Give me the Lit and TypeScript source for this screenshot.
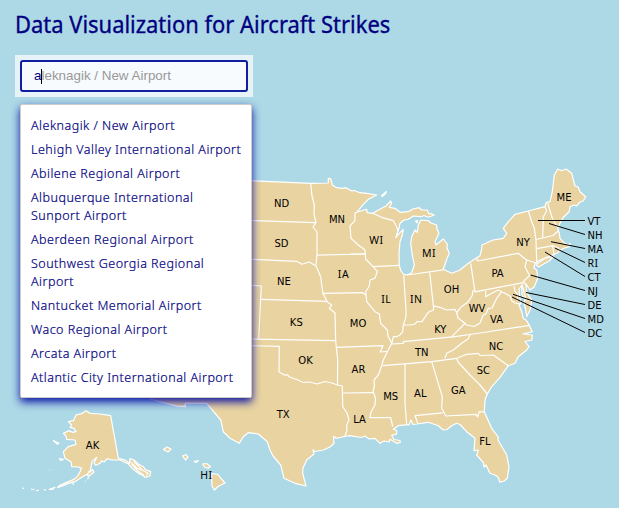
import { LitElement, html, svg, css } from "lit";
import { customElement } from "lit/decorators.js";

const MAINLAND =
  "M150 300L200 178L252 180.7L310.7 183.3L328.3 183V178.3L330.7 178.7L332.3 185L336.7 187.7L342.3 188.3L346 187.7L351.7 191L354 190.5L360 192.7L366.7 193.3L376.7 195L368.3 199.3L363.3 204.3L356.7 212.3L366.7 209.3L367.3 212.7L372.7 213.3L381.7 208.3L386 206L390.7 201L391.7 203.3L389.3 207.3L395 208.3L400 212.3L408.3 211.7L413 209L419 207.7L421.7 210L427.3 210L429 214L431 213.5L434.3 215L428.3 217.3L424 215.5L421.7 216.7L413.3 216L408.3 219.3L404 220L400 223.3L399 228.3L395.7 237.7L399.3 233.3L403.3 229.3L402.3 235L400 241.7L399 253.3L399.3 265.7L401 271L403.3 274L407.3 275L411.7 272.7L414.3 265L412.3 255L410.7 243.3L411.7 236.7L415 230L417.3 232.3L418.3 225L420.7 220L428.3 220.7L431 223L436.7 225L437 229L439 233.3L435 241.7L436 245L440 241.7L443.3 239L447.3 244L447 248L449.3 253.3L446.7 259.3L443.3 269.3L451.7 273.3L460 270L468.3 263.3L480 255.7L481.7 249L482 245L493 240L503.3 238.3L506.7 233.3L503.3 228.3L508.3 221.7L515 214.3L528.3 211L545 206.7L546 202.7L550 201.7L552.3 191.7L553.3 183.3L554.3 175L557.7 169L561.7 170.7L566 169L571.7 173.3L575 186L578 187L580 191.7L585.7 196.7L583 201L580 202L576.7 206L574 205L570 206.7L569.3 211.7L563.3 217.3L560 223.3L557.7 228.3L559.3 233.3L560 238.3L564 242.7L568.5 245L570 243.3L569.5 246.7L563.3 248.3L556.7 253.3L546.7 257.3L538.3 260.7L535 264L534 268L536.7 270L537.7 278.3L534.3 286.7L530 290L526 284L526.7 292.7L531.7 300L530 310L526.7 316.7L525.5 308.3L524 304L525 299L522 295L521.7 285.5L519 289L519.5 295L521 303.3L519 305L521.7 311.7L523.3 318.3L526 320L528.3 323.3L532.3 331.7L523 334L532.3 335L532 340L525 341.5L529 346.7L526.7 350L518.3 356.7L515 363.3L508.3 365.7L500 377.3L491.7 386.7L487.3 394L485 400L484.3 411.7L491.7 428.3L498.3 437L498 440L506.7 455L509 466.7L507.3 478.3L504 481L500 482.3L498 477L495 475L490 473.3L486 465L484 467L483.3 462.7L476.7 455L478.3 450L474 450.7L475 438.3L466.7 431.7L460 424.5L456.7 423.3L451.7 425.7L447 429.5L443.3 430L438.3 425.7L428.3 422.3L416.7 424L412.7 424.3L411 420L409 425L405 424.8L398.3 425.7L393.3 429.3L396.7 430.5L396.5 434.3L391.7 435L394 439.5L400 440.5L400.3 442.5L396.7 443.3L390 439.3L389 442L384 441L380 443.3L375 438.3L369 439L365 436L361 437.5L350 435.7L346.7 436L336 438.3L333.5 436.3L334 443.3L330 447L323.3 450L315 451.5L313 450L314 454L306.7 460L303 468L302.7 473.3L306 486L295 483.3L284 478.3L280.7 465L273 456L270 450L267.3 441.7L258.3 434L248.3 432.7L243.3 436.7L239.3 443.3L230 438.3L223.3 431.7L220.7 420L206.7 403.3L185.3 403V406.7L176.7 406L150 399Z";

const ISLANDS =
  "M538 263L545 258.5L554 256L549 261L538.5 267L536.5 265.5ZM381.5 195.5L386.5 191.5L385 194.5L382 196.5ZM415.5 221L417.5 220.5L417 223ZM163.5 449.5L167 447L171 449L168 452ZM182.5 456L186 454.5L188 457L185.5 460ZM194 461.5L198.5 460.5L196 462.5ZM202.5 464L206.5 463.5L210.5 466.5L208 468.3L204.5 467ZM211.5 473.5L218 474.5L221 478.5L225 483L218 486.5L214.5 490L212 486Z";

const ALASKA =
  "M205 65L220 62L228 45L245 41L258 32L270 40L300 42L332 47L355 175L375 180L388 190L390 176L402 180L415 192L430 200L436 209L452 215L450 228L435 232L427 225L415 220L400 208L385 192L360 180L335 180L322 176L312 186L305 182L300 190L288 196L282 190L290 172L276 184L272 208L262 222L245 232L225 245L205 250L190 257L172 263L178 257L200 247L222 238L235 226L245 205L235 201L215 200L213 185L195 175L190 155L205 140L228 133L225 120L200 118L198 108L190 100L207 92L218 97L228 95L222 85L210 82L215 75ZM160 122L177 130L172 133ZM178 176L190 178L182 181ZM262 222L278 209L282 216L265 230ZM390 185L412 205L430 212L444 220L438 226M400 184L425 207M395 192L415 214L432 226M157 265L165 262L158 268L148 268ZM131 270L138 269M108 272L117 271M93 267L103 269M67 263L72 266M148 210H150M256 244H258M262 237L266 234M217 253L222 251";

const BORDERS = [
  "310.7,183.3 312,196 314.3,205 314,214 316,222.7 313,227 317,232 317,255 316,265",
  "252,220.5 316,222.7",
  "317,255.2 365,254",
  "252,259.3 296.7,261.3 302,264.3 309.3,262 316,266 318.7,272 320.7,277 321.7,285 323,293.3 327.3,302 331.7,305 329.3,308.3 335,313 335.7,341 336.3,347 337.7,360 337.5,385",
  "261,299.3 327,301.3",
  "252,285.3 261.3,286 258.7,339",
  "252,339 335.5,340.7",
  "252,345.7 279.3,346.3 279,372 285,375.3 287,374.5 290,377.3 297,379.5 303,382.5 310,382 317,384 325,381.5 332,383 337.3,385 342.3,386 342.7,406.7 347,413 349,420 346.7,425 347,430 345,436",
  "342.7,393 374,392.7",
  "323,293.3 362.7,292.7 366,295",
  "336.3,347.3 383,345.7 381,350 380,352 387,351.5",
  "356.7,212.3 355,213 355,220.7 350,226 351,238.3 358.3,245 365,250 365.7,259.3 373.3,266.7 377.3,271.7 375,278.3 370,280 369.3,286 365.7,291.7 366.7,301.7 375,311.7 379.3,314 380.7,323.3 387.3,330 388,336 391.7,343.3 388.3,350 383.3,360 381.7,365.7 378.3,375 374,380 374.5,386 373,391 375.5,398.3 375,405 371,412 370,417.7 390.7,417.7 392.7,426.7",
  "350,254.2 365,254",
  "373.3,266.7 399,265.3",
  "372.7,213.3 381.7,217.3 393.3,220.7 396.7,226.7 398,231",
  "403.7,275 405,295 406,310 406,316.7 403.3,325 402.7,331.7 400,335 396.7,336.7 393.3,336.7 391.7,343.7",
  "403.3,325 410,325 415,324 417,321.7 422,321.7 428.3,312.3 433.3,310 434,306 440,307.3 446.7,310 455,309.3 456.7,312.7 460.7,307.3 468.3,301.7 472,296 473.3,290",
  "429.7,272.5 433.5,307",
  "407.3,275 443.3,269.8",
  "470.7,263.3 475,291.9 523.3,282.7",
  "456.7,312.7 458,318 465,323.3 451.7,336.7",
  "462,321 466.7,325 474,326.5 480,323 483.3,315 486,314 488.3,308.3 492,308 496.7,298.3 501.7,291.7",
  "485.7,291 485.7,296.7 491.7,293.3 498,290 501.7,291.7 510,296 511.7,300.7 515,303 521,304",
  "522,284 526,300 531.7,300",
  "514,286 515,291 518,295 517,301",
  "477,258 477.3,261 518.3,253.3 524,258 526.7,260 525,266.7 528.3,273.3 530,275 523.3,281.7 526,285",
  "526.7,260 536.7,263.3",
  "528.3,211 531.7,221.7 534.3,228.3 536,240 536.7,262",
  "545,206.7 546.7,211 543.3,216.7 542.7,237.8",
  "547.7,203.3 552.3,218.3 557,227",
  "536,239.5 553.3,235.5 558,231",
  "536.7,248.7 553.3,245.7 558,248 560,250",
  "552.5,246 554,254",
  "530,325.3 480,333 455,336.7 403.3,341.7 403.3,343.3 391.7,344",
  "382.7,365.7 431.7,361.7 456.7,358.3 466.7,354.3 478.3,353.3 480,355.5 493.3,355 508.3,365.7",
  "445,358.3 446.7,353.3 453.3,350 461.7,343.3 468,339 470,335",
  "456.7,358.5 458,362 470,375 480,385 487.3,394",
  "431.7,361.7 442.3,396.7 441.7,408 445.7,416 476,414.3 477.5,417 479.3,411.7 484.3,412",
  "405,364 405,403 406.7,425",
  "417.7,423 415,415.7 442.7,412.8",
];

const LABELS: [string, number, number][] = [
  ["ND", 281.5, 203.5], ["SD", 281.5, 243.5], ["MN", 337, 219.5], ["WI", 376.5, 240.5],
  ["MI", 429, 253.5], ["IA", 343.5, 274.5], ["NE", 284, 281.5], ["IL", 386.3, 299.5],
  ["IN", 416.3, 299.5], ["OH", 451.5, 289.5], ["PA", 497.5, 273.5], ["NY", 523, 242.5],
  ["ME", 564, 197.5], ["KS", 296.3, 322.5], ["MO", 358, 323.5], ["KY", 440.3, 329.5],
  ["WV", 477, 308.5], ["VA", 496.5, 319.5], ["OK", 305.5, 360.5], ["AR", 358.5, 369.5],
  ["TN", 421.7, 352.5], ["NC", 496, 346.5], ["SC", 483.3, 370.5], ["GA", 458.3, 390.5],
  ["AL", 420.3, 393.5], ["MS", 390.7, 396.5], ["LA", 359.5, 419.5], ["TX", 283.2, 414.5],
  ["FL", 485, 441.5], ["AK", 92.5, 445.5], ["HI", 206.3, 475.5],
];

const CALLOUTS: [string, number, number, number][] = [
  ["VT", 221.5, 538, 220.5], ["NH", 235.5, 549, 223.5], ["MA", 249.5, 551, 241.7],
  ["RI", 263.5, 555, 248], ["CT", 277.5, 545, 252], ["NJ", 291.5, 530.5, 275],
  ["DE", 305.5, 526, 292.5], ["MD", 319.5, 513, 294.3], ["DC", 333.5, 512, 297],
];

@customElement("strike-map")
class StrikeMap extends LitElement {
  static styles = css`
    :host { display: block; }
    svg { display: block; }
    .land { fill: #e8d3a1; stroke: #fff; stroke-width: 1.2; stroke-linejoin: round; }
    .alaska { stroke-width: 3.6; }
    .border { fill: none; stroke: #fff; stroke-width: 1.2; stroke-linejoin: round; }
    .lead { stroke: #000; stroke-width: 1; }
    text { font: 10px "DejaVu Sans", Verdana, sans-serif; fill: #000; }
    .mid { text-anchor: middle; }
    .serifed { font: 10.5px "Noto Sans", sans-serif; letter-spacing: 0.5px; }
  `;
  render() {
    return html`<svg width="619" height="508" viewBox="0 0 619 508">
      <path class="land" d=${MAINLAND} />
      <path class="land" d=${ISLANDS} />
      <path class="land alaska" transform="translate(0 400) scale(.33333)" d=${ALASKA} />
      ${BORDERS.map((p) => svg`<polyline class="border" points=${p} />`)}
      ${LABELS.map(([t, x, y]) => svg`<text class=${t.includes("I") ? "mid serifed" : "mid"} x=${x} y=${Math.floor(y + 3.5)}>${t}</text>`)}
      ${CALLOUTS.map(([t, y, x1, y1]) => svg`
        <line class="lead" x1=${x1} y1=${y1} x2="585" y2=${y - 1}></line>
        <text class=${t.includes("I") ? "serifed" : ""} x="587.5" y=${Math.floor(y + 3.5)}>${t}</text>`)}
    </svg>`;
  }
}

const AIRPORTS = [
  ["Aleknagik / New Airport"],
  ["Lehigh Valley International Airport"],
  ["Abilene Regional Airport"],
  ["Albuquerque International", "Sunport Airport"],
  ["Aberdeen Regional Airport"],
  ["Southwest Georgia Regional", "Airport"],
  ["Nantucket Memorial Airport"],
  ["Waco Regional Airport"],
  ["Arcata Airport"],
  ["Atlantic City International Airport"],
];

@customElement("app-root")
class AppRoot extends LitElement {
  static styles = css`
    :host { display: block; position: relative; width: 619px; height: 508px; overflow: hidden; background: #add8e6; color: #000080; font-family: "Noto Sans", sans-serif; }
    strike-map { position: absolute; inset: 0; }
    .panel { position: relative; padding: 7px 0 0 15px; box-sizing: border-box; }
    h1 { margin: 0; height: 48px; font-size: 24px; line-height: 34px; font-weight: 400; white-space: nowrap; transform: scaleX(0.914); transform-origin: 0 0; -webkit-text-stroke: 0.35px #000080; }
    .search { box-sizing: border-box; width: 238px; height: 42px; padding: 5px; background: rgba(255, 255, 255, 0.7); }
    .field { box-sizing: border-box; width: 228px; height: 32px; padding: 0 12px; display: flex; align-items: center; border: 2px solid #101f9e; border-radius: 3px; background: #f7fbfd; font: 13.4px/16px "Liberation Sans", Arial, sans-serif; white-space: nowrap; }
    .caret { width: 1px; height: 15px; margin-right: -1px; background: #000; }
    .hint { color: #999; }
    ul { list-style: none; box-sizing: border-box; width: 232px; margin: 7px 0 0 5px; height: 294px; padding: 9px 10px; border: 1px solid #ccc; border-radius: 2px; background: #fff; box-shadow: 0 4px 8px rgba(0, 10, 160, 0.95); }
    li { padding: 3px 0; font-size: 12.5px; line-height: 18px; letter-spacing: 0.49px; font-weight: 300; white-space: nowrap; -webkit-text-stroke: 0.2px #000080; }
    .line { display: block; }
  `;
  render() {
    return html`<strike-map></strike-map>
      <div class="panel">
        <h1>Data Visualization for Aircraft Strikes</h1>
        <div class="search">
          <div class="field"><span>a</span><span class="caret"></span><span class="hint">leknagik / New Airport</span></div>
        </div>
        <ul>${AIRPORTS.map((a) => html`<li>${a.map((l) => html`<span class="line">${l}</span>`)}</li>`)}</ul>
      </div>`;
  }
}
